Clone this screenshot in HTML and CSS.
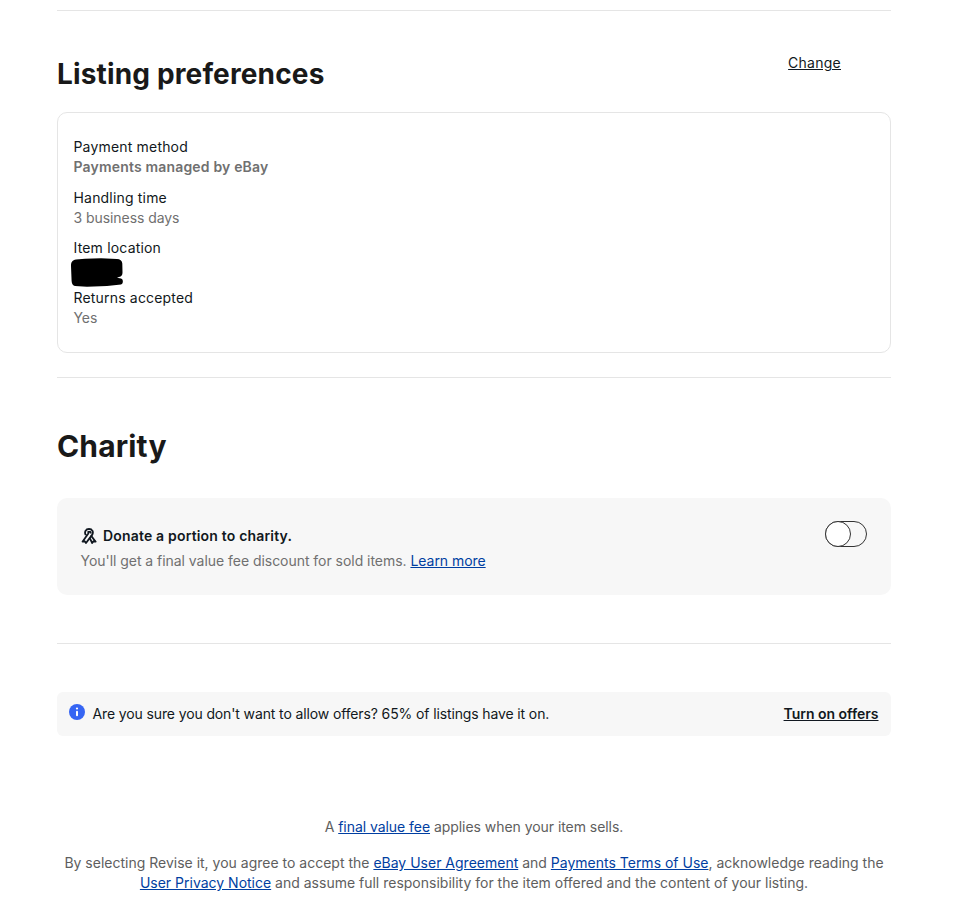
FILE: index.html
```html
<!DOCTYPE html>
<html lang="en">
<head>
<meta charset="utf-8">
<title>Listing preferences</title>
<link rel="stylesheet" href="styles.css">
</head>
<body>
<main class="page">
  <hr class="rule rule-top">
  <section class="section-head">
    <h2 class="title">Listing preferences</h2>
    <a class="change" href="#">Change</a>
  </section>
  <div class="card">
    <dl class="pref first"><dt>Payment method</dt><dd class="bold">Payments managed by eBay</dd></dl>
    <dl class="pref"><dt>Handling time</dt><dd>3 business days</dd></dl>
    <dl class="pref"><dt>Item location</dt><dd class="redacted-row"><svg class="redacted" viewBox="0 0 52 29" width="52" height="29" aria-hidden="true"><path d="M5 1.500 14 .8 30 .2 46 1c3 .2 5 1.500 5.300 4.500l.2 9c0 2.500-1 4-3.500 4.500l-2 .7 4 .8c2.500.5 2.500 5.500 0 6l-14 1.500-20 .8-12-.8C2 27.500.8 26 .6 23L0 8C0 4 1.500 2 5 1.500Z" fill="#000"/></svg></dd></dl>
    <dl class="pref"><dt>Returns accepted</dt><dd>Yes</dd></dl>
  </div>
  <hr class="rule rule-mid">
  <h2 class="title charity-title">Charity</h2>
  <div class="charity">
    <div class="charity-text">
      <p class="charity-head">
        <svg class="ribbon" viewBox="0 0 16 16" width="16" height="16" fill="none" stroke="#111820" stroke-width="1.800" stroke-linejoin="round" aria-hidden="true"><path d="M4.800 7C3.900 5.600 3.900 4 4.600 2.800 5.200 1.600 6.400 1 8 1s2.800.6 3.400 1.800c.7 1.200.6 2.700-.3 4.100L5 15l-1.200-1.700-2.300.4L7.300 5.400c.4-.6-.1-1.400-.8-.9"/><path d="M8.500 9.700 11.200 15l1.200-1.700 2.300.4-4.900-6.300"/><path d="M6.800 3.800h2.400c.6.400.7 1 .3 1.700"/></svg>
        <strong>Donate a portion to charity.</strong>
      </p>
      <p class="charity-sub">You'll get a final value fee discount for sold items. <a href="#">Learn more</a></p>
    </div>
    <span class="switch"><span class="knob"></span></span>
  </div>
  <hr class="rule rule-low">
  <div class="notice">
    <svg class="info" viewBox="0 0 16 16" width="16" height="16" aria-hidden="true"><circle cx="8" cy="8" r="8" fill="#3665f3"/><circle cx="8" cy="4.500" r="1.100" fill="#fff"/><rect x="7" y="6.800" width="2" height="5.400" rx="1" fill="#fff"/></svg>
    <span class="notice-text">Are you sure you don't want to allow offers? 65% of listings have it on.</span>
    <a class="notice-action" href="#">Turn on offers</a>
  </div>
  <footer class="legal">
    <p class="fee">A <a href="#">final value fee</a> applies when your item sells.</p>
    <p>By selecting Revise it, you agree to accept the <a href="#">eBay User Agreement</a> and <a href="#">Payments Terms of Use</a>, acknowledge reading the <a href="#">User Privacy Notice</a> and assume full responsibility for the item offered and the content of your listing.</p>
  </footer>
</main>
</body>
</html>
```
FILE: styles.css
```css
* { box-sizing: border-box; }
html, body { margin: 0; padding: 0; background: #fff; }
body {
  font-family: Inter, "Liberation Sans", sans-serif;
  font-size: 14px;
  line-height: 20px;
  color: #111820;
  height: 904px;
  overflow: hidden;
}
p, dl, dd, h2 { margin: 0; }
.page { width: 834px; margin-left: 57px; padding-top: 10px; }
.rule { border: 0; border-top: 1px solid #e5e5e5; margin: 0; }
.section-head { display: flex; justify-content: space-between; align-items: flex-start; height: 101px; }
.title { font-size: 28px; line-height: 36px; font-weight: 700; color: #191919; letter-spacing: 0.15px; }
.section-head .title { margin-top: 45px; }
.change { color: #111820; margin: 42px 50px 0 0; letter-spacing: 0.25px; }
.card { height: 241px; border: 1px solid #e5e5e5; border-radius: 10px; padding: 24px 15.500px 0; }
.pref { margin-bottom: 10px; }
.pref.first { margin-bottom: 11px; }
.pref dt { letter-spacing: 0.18px; }
.pref dd { color: #707070; letter-spacing: -0.06px; }
.pref dd.bold { font-weight: 600; letter-spacing: 0.17px; }
.redacted-row { height: 20px; }
.redacted { display: block; margin: 0 0 0 -3px; overflow: visible; }
.rule-mid { margin-top: 24px; }
.charity-title { margin-top: 50px; height: 36px; font-size: 30px; }
.charity { margin-top: 34px; height: 97px; background: #f7f7f7; border-radius: 10px; display: flex; justify-content: space-between; padding: 24px 24px 0 23.500px; }
.charity-head { display: flex; align-items: center; gap: 6.500px; height: 28px; }
.charity-head strong { font-weight: 600; letter-spacing: 0.18px; }
.ribbon { flex: none; }
.charity-sub { color: #707070; margin-top: 1px; letter-spacing: -0.04px; }
.switch { display: block; width: 42px; height: 26px; border: 1.500px solid #333; border-radius: 13px; position: relative; margin-top: -1px; }
.knob { position: absolute; left: -1.500px; top: -1.500px; width: 26px; height: 26px; background: #fff; border: 1.500px solid #333; border-radius: 50%; }
a { color: #003ea1; }
.change, .notice-action { color: #111820; }
.rule-low { margin-top: 48px; }
.notice { margin-top: 48px; height: 44px; background: #f7f7f7; border-radius: 6px; display: flex; align-items: center; padding: 0 12.500px 0 12px; }
.info { flex: none; margin: -4px 7.500px 0 0; }
.notice-text { flex: 1; letter-spacing: -0.125px; }
.notice-action { font-weight: 600; letter-spacing: -0.02px; }
.legal { margin-top: 81px; text-align: center; color: #5e5e5e; }
.fee { margin-bottom: 16px; letter-spacing: -0.05px; }
```
